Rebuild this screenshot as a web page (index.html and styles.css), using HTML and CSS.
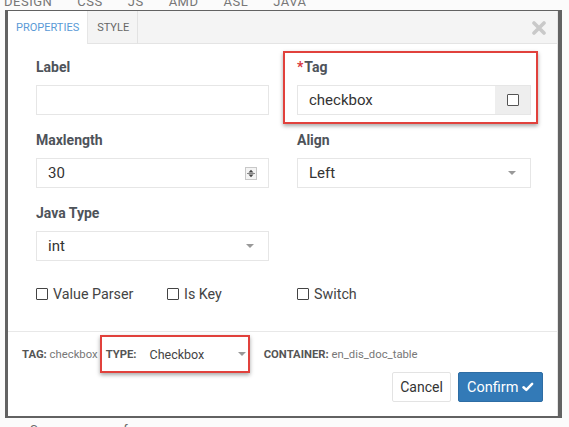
FILE: index.html
```html
<!DOCTYPE html>
<html>
<head>
<meta charset="utf-8">
<link rel="stylesheet" href="styles.css">
</head>
<body>
<div class="page">
  <div class="bg-strip bg-top"><span>DESIGN</span><span>CSS</span><span>JS</span><span>AMD</span><span>ASL</span><span>JAVA</span></div>
  <div class="frame">
    <div class="modal">
      <div class="tabs">
        <div class="tab active">PROPERTIES</div>
        <div class="tab">STYLE</div>
        <div class="close">
          <svg width="14" height="14" viewBox="0 0 14 14"><path d="M2 2L12 12M12 2L2 12" stroke="#c9c9c9" stroke-width="3.6" stroke-linecap="round"/></svg>
        </div>
      </div>
      <div class="body">
        <div class="form">
          <div class="field">
            <label class="lbl">Label</label>
            <div class="input"></div>
          </div>
          <div class="field marked">
            <label class="lbl"><span class="req">*</span>Tag</label>
            <div class="input group">
              <span class="val">checkbox</span>
              <span class="addon"><span class="sq"></span></span>
            </div>
          </div>
          <div class="field">
            <label class="lbl">Maxlength</label>
            <div class="input">
              <span class="val">30</span>
              <svg class="spin" width="12" height="13" viewBox="0 0 12 13"><rect x="0.5" y="0.5" width="11" height="12" fill="#f4f4f4" stroke="#c8c8c8"/><path d="M3.5 5.5L6 2.8L8.5 5.5Z" fill="#444"/><path d="M3.5 7.5L6 10.2L8.5 7.5Z" fill="#444"/><path d="M2 6.5H10" stroke="#888" stroke-width="1"/></svg>
            </div>
          </div>
          <div class="field">
            <label class="lbl">Align</label>
            <div class="input">
              <span class="val">Left</span>
              <span class="caret"></span>
            </div>
          </div>
          <div class="field">
            <label class="lbl">Java Type</label>
            <div class="input">
              <span class="val">int</span>
              <span class="caret"></span>
            </div>
          </div>
          <div></div>
          <div class="checks">
            <span class="chk"><span class="sq"></span>Value Parser</span>
            <span class="chk"><span class="sq"></span>Is Key</span>
          </div>
          <div class="checks">
            <span class="chk"><span class="sq"></span>Switch</span>
          </div>
        </div>
      </div>
      <div class="footer">
        <div class="info">
          <span class="item"><b>TAG:</b> checkbox</span>
          <span class="typegrp">
            <b>TYPE:</b>
            <span class="typesel">Checkbox<span class="caret"></span></span>
          </span>
          <span class="item"><b>CONTAINER:</b> en_dis_doc_table</span>
        </div>
        <div class="actions">
          <button class="btn cancel">Cancel</button>
          <button class="btn confirm">Confirm <svg width="14" height="12" viewBox="0 0 14 12"><path d="M1.8 6.3L5.2 9.4L12.2 2.2" fill="none" stroke="#fff" stroke-width="3" stroke-linecap="round" stroke-linejoin="round"/></svg></button>
        </div>
      </div>
    </div>
  </div>
  <div class="bg-strip bg-bottom"><span>Sequencenum of</span></div>
</div>
</body>
</html>
```
FILE: styles.css
```css
* { box-sizing: border-box; }
html, body { margin: 0; padding: 0; }
body {
  background: #fbfbfb;
  font-family: Roboto, "Liberation Sans", Arial, sans-serif;
  color: #444;
}
.page { width: 569px; height: 427px; overflow: hidden; }

.bg-strip {
  height: 10px;
  overflow: hidden;
  display: flex;
  font-size: 13px;
  color: #777;
  line-height: 13px;
}
.bg-top { padding-left: 4px; }
.bg-top span { margin-top: -5px; margin-right: 25px; letter-spacing: 0.5px; }
.bg-bottom { padding-left: 30px; height: 9px; }
.bg-bottom span { margin-top: 5px; color: #666; }

.frame {
  margin-left: 5px;
  width: 557px;
  height: 408px;
  border-style: solid;
  border-color: #626262;
  border-width: 1px 4px 2px 3px;
  background: #fff;
}
.modal {
  height: 100%;
  display: flex;
  flex-direction: column;
  border-right: 1px solid #e6e6e6;
}

.tabs {
  height: 33px;
  background: #f4f4f4;
  border-bottom: 1px solid #e4e4e4;
  display: flex;
  align-items: stretch;
}
.tab {
  font-size: 11px;
  color: #666;
  display: flex;
  align-items: center;
  padding: 0 8px 0 9px;
  border-right: 1px solid #e2e2e2;
  margin-bottom: -1px;
}
.tab.active {
  background: #fff;
  color: #5a9ad6;
  padding: 0 8px 0 8px;
  border-right: 1px solid #e6e6e6;
}
.close {
  margin-left: auto;
  width: 36px;
  display: flex;
  align-items: center;
  justify-content: center;
  padding-top: 2px;
}

.body { flex: 1; }
.form {
  padding: 14px 26px 0 28px;
  display: grid;
  grid-template-columns: 233px 234px;
  column-gap: 28px;
  row-gap: 16px;
}
.field { position: relative; }
.lbl {
  display: block;
  font-size: 14px;
  font-weight: bold;
  color: #4e535a;
  line-height: 18px;
  margin-bottom: 9px;
}
.req { color: #d9363e; margin-right: 1px; font-size: 14px; }
.input {
  height: 30px;
  border: 1px solid #e6e6e6;
  display: flex;
  align-items: center;
  padding-left: 11px;
  padding-right: 12px;
  font-size: 15px;
  color: #333;
  position: relative;
}
.input .val { flex: 1; }
.input.group { padding-right: 0; }
.addon {
  width: 35px;
  align-self: stretch;
  background: #eeeeee;
  display: flex;
  align-items: center;
  justify-content: center;
}
.sq {
  display: inline-block;
  width: 12px;
  height: 12px;
  border: 1.5px solid #555;
  border-radius: 1px;
  background: #fff;
}
.spin { margin-right: -1px; }
.caret {
  width: 0; height: 0;
  border-left: 4px solid transparent;
  border-right: 4px solid transparent;
  border-top: 4px solid #999;
  margin-right: 2px;
}
.marked::before {
  content: "";
  position: absolute;
  top: -7px; bottom: -9px; left: -14px; right: -7px;
  border: 2px solid #e1413c;
  box-shadow: 0 2px 4px rgba(0,0,0,0.35);
  pointer-events: none;
}

.checks {
  display: flex;
  margin-top: 8px;
  font-size: 14.3px;
  color: #444;
  height: 18px;
  align-items: center;
}
.chk { display: inline-flex; align-items: center; width: 131px; flex-shrink: 0; }
.chk .sq { width: 12px; height: 12px; margin-right: 5px; border-width: 1px; border-color: #444; }

.footer {
  height: 85px;
  border-top: 1px solid #e8e8e8;
  padding: 0 14px;
}
.info {
  height: 40px;
  padding-top: 4px;
  display: flex;
  align-items: center;
  font-size: 11.3px;
  color: #777;
}
.info b { color: #555; font-weight: bold; }
.typegrp {
  position: relative;
  display: inline-flex;
  align-items: center;
  margin-left: 8px;
  width: 142px;
}
.typegrp::before {
  content: "";
  position: absolute;
  top: -12px; bottom: -11px; left: -6px; right: -2px;
  border: 2px solid #e1413c;
  box-shadow: 0 2px 4px rgba(0,0,0,0.35);
}
.typesel {
  margin-left: 13px;
  flex: 1;
  display: flex;
  align-items: center;
  justify-content: space-between;
  font-size: 12.5px;
  color: #444;
}
.typegrp + .item { margin-left: 16px; }

.actions {
  display: flex;
  justify-content: flex-end;
  gap: 7px;
}
.btn {
  height: 30px;
  font-family: Roboto, "Liberation Sans", Arial, sans-serif;
  font-size: 14px;
  border-radius: 2px;
  padding: 0 8px;
  display: inline-flex;
  align-items: center;
  gap: 4px;
}
.cancel { background: #fff; border: 1px solid #e3e3e3; color: #333; width: 59px; justify-content: center; }
.confirm { background: #337ab7; border: 1px solid #2e6da4; color: #fff; width: 85px; justify-content: center; font-size: 14.5px; }
```
